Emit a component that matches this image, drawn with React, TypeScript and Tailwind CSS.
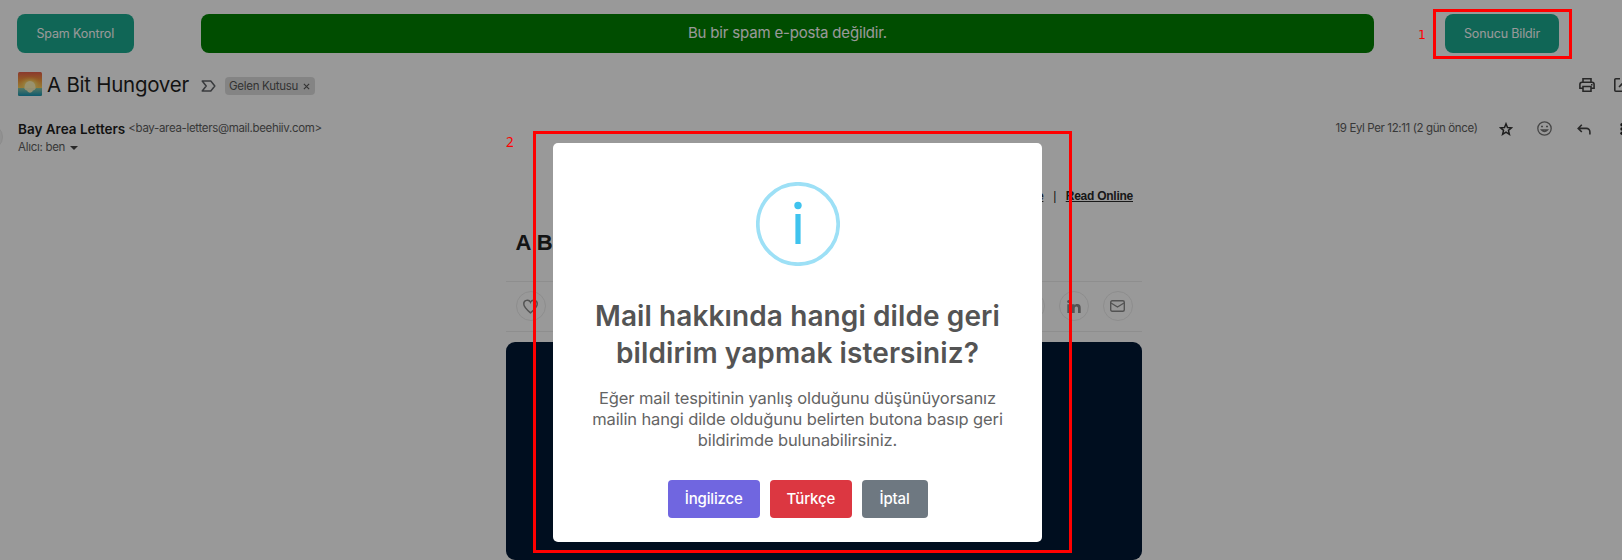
import type { ReactNode } from "react";

function Sunrise() {
  return (
    <svg viewBox="0 0 24 24" className="size-6 shrink-0">
      <defs>
        <linearGradient id="sky" x1="0" y1="0" x2="0" y2="1">
          <stop offset="0" stopColor="#e8604c" />
          <stop offset="0.35" stopColor="#f59a3c" />
          <stop offset="0.68" stopColor="#fdd663" />
        </linearGradient>
        <linearGradient id="sea" x1="0" y1="0" x2="0" y2="1">
          <stop offset="0" stopColor="#8fc9a8" />
          <stop offset="1" stopColor="#1596b8" />
        </linearGradient>
        <radialGradient id="glow" cx="0.5" cy="0.75" r="0.5">
          <stop offset="0" stopColor="#fff6b0" />
          <stop offset="0.5" stopColor="#fddc6b" stopOpacity="0.7" />
          <stop offset="1" stopColor="#fbb040" stopOpacity="0" />
        </radialGradient>
      </defs>
      <rect width="24" height="24" rx="1.500" fill="url(#sky)" />
      <rect width="24" height="17" fill="url(#glow)" />
      <path d="M0 16h24v6.500a1.500 1.500 0 0 1-1.500 1.500h-21A1.500 1.500 0 0 1 0 22.500z" fill="url(#sea)" />
      <path d="M6.500 15a5.500 6 0 0 1 11 0v1h-11z" fill="#fff3b8" />
      <path d="M6 16h12l-1.500 2-1.500.6-1 1.400-2 .8-2-.8-1-1.400-1.500-.6z" fill="#f4edbd" />
    </svg>
  );
}

function RoundIcon({ children }: { children?: ReactNode }) {
  return (
    <span className="flex size-[30px] items-center justify-center rounded-full border border-[#ececec] text-[#8a8a8a]">
      {children}
    </span>
  );
}

function TopBar() {
  return (
    <div className="flex h-[38.500px] items-stretch text-[12.500px] text-white">
      <button className="w-[116.500px] rounded-lg bg-[#1bab90] pt-[1.500px] tracking-[-0.13px]">Spam Kontrol</button>
      <div className="ml-[67.500px] flex w-[1173px] items-center justify-center rounded-lg bg-[#008000] text-[15px] tracking-[-0.18px]">
        Bu bir spam e-posta değildir.
      </div>
      <button className="ml-[71px] w-[114px] rounded-lg bg-[#1bab90] pt-[1.500px] tracking-[-0.15px]">Sonucu Bildir</button>
    </div>
  );
}

function Subject() {
  return (
    <div className="mt-[19.500px] flex h-6 w-[1620px] items-center">
      <Sunrise />
      <h1 className="mt-[2px] ml-[5px] w-[154px] text-[20.500px] tracking-[-0.26px] text-[#1f1f1f]">A Bit Hungover</h1>
      <svg viewBox="0 0 15 12" className="mt-1 h-3 w-[15px]" fill="none" stroke="#606368" strokeWidth="1.500">
        <path d="M1.200 1h8.600l4 5-4 5H1.200l4-5z" strokeLinejoin="round" />
      </svg>
      <div className="mt-1 ml-[9px] flex h-[17.500px] w-[90px] items-center rounded bg-[#dddddd] pt-px pl-1 text-[11.500px] tracking-[-0.28px] text-[#555]">
        Gelen Kutusu
        <svg viewBox="0 0 8 8" className="ml-[5px] size-[7px]" stroke="#555" strokeWidth="1.300">
          <path d="M1 1l6 6M7 1L1 7" />
        </svg>
      </div>
      <svg viewBox="0 0 16 14" className="mt-0.5 ml-[1264px] h-3.5 w-4 shrink-0" fill="none" stroke="#444" strokeWidth="1.600">
        <path d="M4 4V.8h8V4M4 10.200H.9V6.500A2.200 2.200 0 0 1 3 4.300h10a2.200 2.200 0 0 1 2.100 2.200v3.700H12M4 8.500h8v4.700H4z" />
        <path d="M12 6.700h1.500" />
      </svg>
      <svg viewBox="0 0 14 14" className="mt-0.5 ml-[19px] size-3.5 shrink-0" fill="none" stroke="#444" strokeWidth="1.600">
        <path d="M6 .8H1.800a1 1 0 0 0-1 1v10.400a1 1 0 0 0 1 1h10.400a1 1 0 0 0 1-1V8M8.500.8h4.700v4.700M13 1L5 9" />
      </svg>
    </div>
  );
}

function Sender() {
  return (
    <div className="mt-[23px] flex h-9 items-start text-[11.500px] text-[#5e5e5e]">
      <div className="w-[1317.500px]">
        <div className="flex h-5 items-center">
          <span className="text-[13.500px] font-semibold text-[#1f1f1f]">Bay Area Letters</span>
          <span className="ml-[3px] tracking-[-0.33px]">&lt;bay-area-letters@mail.beehiiv.com&gt;</span>
        </div>
        <div className="flex h-[18px] items-center">
          <span className="tracking-[-0.29px]">Alıcı: ben</span>
          <svg viewBox="0 0 8 4" className="ml-[5px] h-1 w-2" fill="#444">
            <path d="M0 0h8L4 4z" />
          </svg>
        </div>
      </div>
      <div className="flex h-5 items-center">
        <span className="w-[163.500px] tracking-[-0.38px]">19 Eyl Per 12:11 (2 gün önce)</span>
        <svg viewBox="0 0 14 14" className="size-3.5" fill="none" stroke="#333" strokeWidth="1.500">
          <path d="M7 1.800l1.500 3.700 4 .3-3.050 2.550.95 3.950L7 10.200l-3.400 2.100.95-3.950L1.500 5.800l4-.3z" />
        </svg>
        <svg viewBox="0 0 15 15" className="-mt-px ml-[24px] size-[15px]" fill="none" stroke="#757575" strokeWidth="1.300">
          <circle cx="7.500" cy="7.500" r="6.700" />
          <path d="M4 5.500h2M9 5.500h2" strokeWidth="1.600" />
          <path d="M4.500 9q3 3.200 6 0z" />
        </svg>
        <svg viewBox="0 0 14 11" className="ml-[24.500px] h-[11px] w-3.5" fill="none" stroke="#444" strokeWidth="1.600">
          <path d="M4.800.8L1.200 4.400 4.800 8M1.400 4.400h8a3.500 3.500 0 0 1 3.500 3.500V10.500" />
        </svg>
        <svg viewBox="0 0 4 12" className="ml-[29px] h-3 w-1" fill="#222">
          <circle cx="2" cy="1.700" r="1.700" />
          <circle cx="2" cy="6" r="1.700" />
          <circle cx="2" cy="10.300" r="1.700" />
        </svg>
      </div>
    </div>
  );
}

function Letter() {
  return (
    <article className="ml-[489px] w-[636px] font-['Liberation_Sans',sans-serif]">
      <div className="mt-[31px] flex h-5 items-center justify-end pr-[9px] text-[12px] font-bold tracking-[-0.25px] text-[#2a2a2a]">
        <span className="underline">Subscribe</span>
        <span className="mr-[9.500px] ml-[10px] font-normal">|</span>
        <span className="underline">Read Online</span>
      </div>
      <h2 className="mt-[20px] h-[54.500px] pl-[9.500px] text-[22px] leading-[34px] font-bold text-[#222]">A Bit Hungover</h2>
      <div className="flex h-[51px] items-center justify-between border-y border-[#ededed] px-[9.500px]">
        <RoundIcon>
          <svg viewBox="0 0 24 24" className="size-[17px]" fill="none" stroke="currentColor" strokeWidth="2">
            <path d="M12 21C6 16 2.500 12.500 2.500 8.500A5 5 0 0 1 12 6a5 5 0 0 1 9.500 2.500C21.500 12.500 18 16 12 21z" />
          </svg>
        </RoundIcon>
        <div className="flex gap-[14px]">
          <RoundIcon />
          <RoundIcon>
            <svg viewBox="0 0 14 13" className="h-[13px] w-3.5" fill="currentColor">
              <path d="M.3 4.300H3V13H.3zM5 4.300h2.600v1.200c.5-.9 1.500-1.400 2.700-1.400 2.600 0 3.400 1.600 3.400 4V13H11V8.600c0-1.200-.3-2.200-1.500-2.200-1.300 0-1.800.9-1.800 2.200V13H5z" />
              <circle cx="1.650" cy="1.600" r="1.500" />
            </svg>
          </RoundIcon>
          <RoundIcon>
            <svg viewBox="0 0 15 12" className="h-3 w-[15px]" fill="none" stroke="currentColor" strokeWidth="1.400">
              <rect x=".7" y=".7" width="13.600" height="10.600" rx="1.500" />
              <path d="M1 3l6.500 4L14 3" />
            </svg>
          </RoundIcon>
        </div>
      </div>
      <div className="mt-[10.500px] h-[218px] rounded-[9px] bg-[#001835]" />
    </article>
  );
}

function Dialog() {
  return (
    <section className="mt-[143px] flex h-[398.500px] w-[489.500px] flex-col items-center rounded-[5px] bg-white pt-[38.500px] text-center">
      <svg viewBox="0 0 84 84" className="size-[84px]">
        <circle cx="42" cy="42" r="40.200" fill="none" stroke="#9de0f6" strokeWidth="3.700" />
        <circle cx="42" cy="23.500" r="3.700" fill="#3fc3ee" />
        <rect x="39.400" y="32" width="5.200" height="30" fill="#3fc3ee" />
      </svg>
      <h2 className="mt-[32.500px] text-[28px] leading-[36.500px] font-semibold tracking-[0.1px] text-[#545454]">
        Mail hakkında hangi dilde geri
        <br />
        bildirim yapmak istersiniz?
      </h2>
      <p className="mt-[16.500px] text-[16.500px] leading-[21px] tracking-[-0.12px] text-[#646464]">
        Eğer mail tespitinin yanlış olduğunu düşünüyorsanız
        <br />
        mailin hangi dilde olduğunu belirten butona basıp geri
        <br />
        bildirimde bulunabilirsiniz.
      </p>
      <div className="mt-[29px] flex h-[38.500px] gap-[9.500px] text-[15px] font-medium tracking-[-0.15px] text-white">
        <button className="w-[92.500px] rounded bg-[#7066e0]">İngilizce</button>
        <button className="w-[82.500px] rounded bg-[#dc3741]">Türkçe</button>
        <button className="w-[66px] rounded bg-[#6e7881]">İptal</button>
      </div>
    </section>
  );
}

export default function App() {
  return (
    <main className="relative h-[560px] w-[1622px] overflow-hidden bg-white font-['Inter',sans-serif] whitespace-nowrap">
      <div className="h-full overflow-hidden pt-[14px] pl-[17px]">
        <TopBar />
        <div className="w-[1640px] pl-px">
          <Subject />
          <Sender />
        </div>
        <Letter />
      </div>
      <div className="absolute top-[124px] -left-[23px] size-[26px] rounded-full border border-[#e8e8e8] bg-[#f2f2f2]" />

      <div className="absolute inset-0 flex items-start justify-center bg-black/40 pr-[27px]">
        <Dialog />
      </div>

      <div className="absolute top-[9px] left-[1433px] h-[50px] w-[139px] border-3 border-[#ff0000]" />
      <span className="absolute top-[27px] left-[1418px] font-['DejaVu_Sans',sans-serif] text-[12.500px] leading-4 text-[#ff0000]">1</span>
      <div className="absolute top-[131px] left-[533px] h-[422px] w-[539px] border-3 border-[#ff0000]" />
      <span className="absolute top-[134px] left-[506px] font-['Noto_Sans',sans-serif] text-[13.500px] leading-4 text-[#ff0000]">2</span>
    </main>
  );
}
